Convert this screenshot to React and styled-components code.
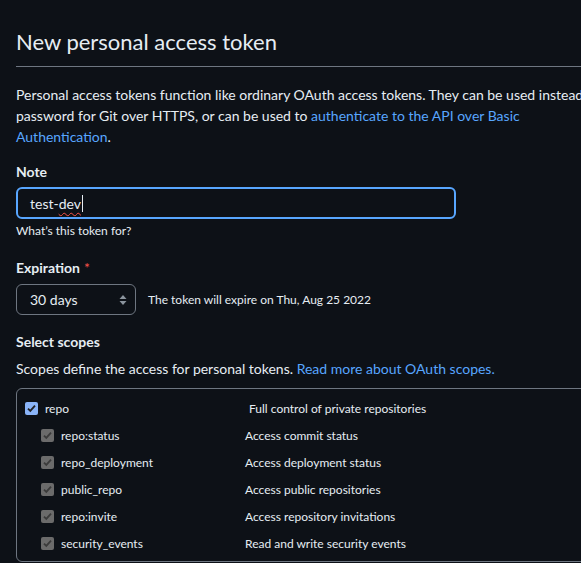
import React from "react";
import styled, { createGlobalStyle } from "styled-components";

const GlobalStyle = createGlobalStyle`
  html, body {
    margin: 0;
    padding: 0;
    background: #0d1117;
    overflow: hidden;
  }
  body {
    font-family: "Segoe UI", Lato, "Noto Sans", sans-serif;
    color: #e6edf3;
  }
`;

const Page = styled.div`
  width: 760px;
  padding: 0 16px;
  box-sizing: border-box;
`;

const Title = styled.h1`
  margin: 24px 0 0;
  padding-bottom: 6px;
  font-size: 22px;
  line-height: 36px;
  font-weight: 400;
  color: #e6edf3;
  border-bottom: 1px solid #6e7681;
  width: 760px;
`;

const Lead = styled.p`
  margin: 17px 0 0;
  font-size: 14px;
  line-height: 21px;
  white-space: nowrap;
`;

const Link = styled.a`
  color: #58a6ff;
  text-decoration: none;
`;

const Label = styled.div`
  margin-top: ${(p) => p.mt || 14}px;
  font-size: 14px;
  line-height: 21px;
  font-weight: 700;
`;

const Required = styled.span`
  color: #f85149;
  margin-left: 4px;
  font-weight: 400;
`;

const TextInput = styled.div`
  margin-top: 5px;
  width: 440px;
  height: 32px;
  box-sizing: border-box;
  border: 2px solid #58a6ff;
  border-radius: 6px;
  padding: 0 12px;
  display: flex;
  align-items: center;
  font-size: 14px;
`;

const Squiggle = styled.span`
  text-decoration: underline wavy #f85149;
  text-decoration-thickness: 1px;
  text-underline-offset: 3px;
`;

const Caret = styled.span`
  display: inline-block;
  width: 1px;
  height: 17px;
  background: #e6edf3;
  margin-left: 1px;
`;

const Hint = styled.div`
  margin-top: ${(p) => p.mt ?? 3}px;
  font-size: 12px;
  line-height: 18px;
`;

const ExpirationRow = styled.div`
  margin-top: 6px;
  display: flex;
  align-items: center;
  gap: 12px;
`;

const Select = styled.div`
  width: 120px;
  height: 31px;
  box-sizing: border-box;
  border: 1px solid #6e7681;
  border-radius: 6px;
  padding: 0 8px 0 13px;
  display: flex;
  align-items: center;
  justify-content: space-between;
  font-size: 14px;
`;

const ScopesText = styled.p`
  margin: 6px 0 0;
  font-size: 14px;
  line-height: 21px;
  white-space: nowrap;
`;

const ScopeBox = styled.div`
  margin-top: 9px;
  width: 760px;
  height: 174px;
  box-sizing: border-box;
  border: 1px solid #6e7681;
  border-radius: 6px;
  padding: 6px 0 0;
`;

const ScopeRow = styled.div`
  display: flex;
  align-items: center;
  height: 27px;
  padding-left: ${(p) => (p.sub ? 24 : 8)}px;
  font-size: 12px;
`;

const ScopeName = styled.span`
  margin-left: 7px;
  width: ${(p) => (p.sub ? 184 : 204)}px;
`;

const Box = styled.span`
  width: 13px;
  height: 13px;
  border-radius: 2px;
  background: ${(p) => (p.disabled ? "#6b6b6b" : "#8ab4f8")};
  display: flex;
  align-items: center;
  justify-content: center;
  flex: none;
`;

const Check = ({ disabled }) => (
  <Box disabled={disabled}>
    <svg width="11" height="11" viewBox="0 0 11 11">
      <path
        d="M2 5.6 L4.3 7.9 L9 2.6"
        fill="none"
        stroke={disabled ? "#3b3b3b" : "#202124"}
        strokeWidth="1.8"
      />
    </svg>
  </Box>
);

const Arrows = () => (
  <svg width="8" height="12" viewBox="0 0 8 12">
    <path d="M4 1 L7.5 5 H0.5 Z" fill="#8b949e" />
    <path d="M4 11 L7.5 7 H0.5 Z" fill="#8b949e" />
  </svg>
);

const scopes = [
  ["repo:status", "Access commit status"],
  ["repo_deployment", "Access deployment status"],
  ["public_repo", "Access public repositories"],
  ["repo:invite", "Access repository invitations"],
  ["security_events", "Read and write security events"],
];

export default function App() {
  return (
    <Page>
      <GlobalStyle />
      <Title>New personal access token</Title>
      <Lead>
        Personal access tokens function like ordinary OAuth access tokens. They
        can be used instead
        <br />
        password for Git over HTTPS, or can be used to{" "}
        <Link href="#">authenticate to the API over Basic</Link>
        <br />
        <Link href="#">Authentication</Link>.
      </Lead>

      <Label>Note</Label>
      <TextInput>
        test-<Squiggle>dev</Squiggle>
        <Caret />
      </TextInput>
      <Hint>What’s this token for?</Hint>

      <Label mt={17}>
        Expiration<Required>*</Required>
      </Label>
      <ExpirationRow>
        <Select>
          30 days
          <Arrows />
        </Select>
        <Hint mt={0}>The token will expire on Thu, Aug 25 2022</Hint>
      </ExpirationRow>

      <Label mt={16}>Select scopes</Label>
      <ScopesText>
        Scopes define the access for personal tokens.{" "}
        <Link href="#">Read more about OAuth scopes.</Link>
      </ScopesText>

      <ScopeBox>
        <ScopeRow>
          <Check />
          <ScopeName>repo</ScopeName>
          Full control of private repositories
        </ScopeRow>
        {scopes.map(([name, desc]) => (
          <ScopeRow sub key={name}>
            <Check disabled />
            <ScopeName sub>{name}</ScopeName>
            {desc}
          </ScopeRow>
        ))}
      </ScopeBox>
    </Page>
  );
}
